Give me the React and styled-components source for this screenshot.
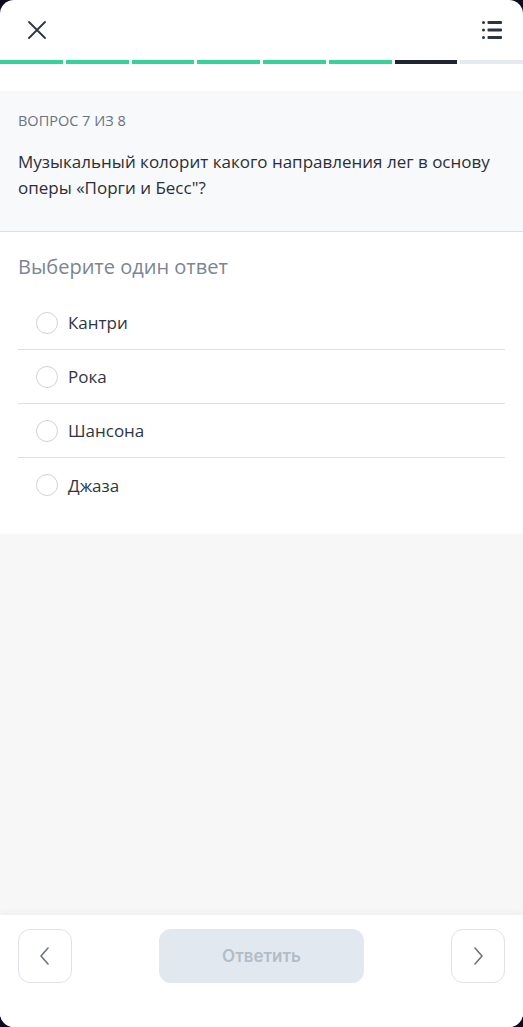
import React from "react";
import styled, { createGlobalStyle } from "styled-components";

const Global = createGlobalStyle`
  html, body { margin: 0; padding: 0; background: #0b0a1f; }
  * { box-sizing: border-box; }
  body { font-family: "Open Sans", "Noto Sans", sans-serif; }
`;

const Screen = styled.div`
  width: 523px;
  height: 1027px;
  background: #ffffff;
  border-radius: 14px;
  overflow: hidden;
  display: flex;
  flex-direction: column;
`;

const Header = styled.header`
  height: 60px;
  display: flex;
  align-items: center;
  justify-content: space-between;
  padding: 0 18px 0 24px;
`;

const IconButton = styled.button`
  width: 26px;
  height: 26px;
  padding: 0;
  border: none;
  background: transparent;
  display: flex;
  align-items: center;
  justify-content: center;
  color: #2d3340;
`;

const Progress = styled.div`
  display: grid;
  grid-template-columns: repeat(8, 1fr);
  column-gap: 3px;
  height: 4px;
`;

const Segment = styled.div`
  height: 4px;
  background: ${(p) =>
    p.$state === "done" ? "#34d399" : p.$state === "current" ? "#1f2433" : "#e5e9f0"};
`;

const QuestionPanel = styled.section`
  margin-top: 27px;
  background: #f8f9fa;
  border-bottom: 1px solid #dcdfe4;
  padding: 20px 18px 30px;
`;

const Counter = styled.div`
  font-size: 14.5px;
  line-height: 20px;
  color: #6b7280;
  text-transform: uppercase;
  margin-bottom: 18px;
`;

const QuestionText = styled.p`
  margin: 0;
  font-size: 17px;
  line-height: 26px;
  color: #2b2f38;
`;

const Answers = styled.section`
  background: #ffffff;
  padding: 22px 18px 22px;
`;

const Hint = styled.h2`
  margin: 0 0 16px;
  font-size: 20px;
  line-height: 26px;
  font-weight: 500;
  color: #7b8593;
`;

const OptionList = styled.ul`
  list-style: none;
  margin: 0;
  padding: 0;
`;

const Option = styled.li`
  height: 54px;
  display: flex;
  align-items: center;
  gap: 10px;
  padding-left: 18px;
  border-bottom: ${(p) => (p.$last ? "none" : "1px solid #dcdfe3")};
  font-size: 17px;
  color: #2f3540;
`;

const Radio = styled.span`
  width: 22px;
  height: 22px;
  border-radius: 50%;
  border: 1px solid #cfd3d8;
  background: #fff;
  flex: none;
`;

const Filler = styled.div`
  flex: 1;
  background: #f7f7f7;
`;

const Footer = styled.footer`
  height: 112px;
  background: #fff;
  box-shadow: 0 -2px 8px rgba(0, 0, 0, 0.04);
  display: flex;
  align-items: flex-start;
  justify-content: space-between;
  padding: 14px 18px 0;
`;

const NavButton = styled.button`
  width: 54px;
  height: 54px;
  border-radius: 12px;
  border: 1px solid #dfe2e6;
  background: #fff;
  display: flex;
  align-items: center;
  justify-content: center;
  padding: 0;
  color: #6b7280;
`;

const SubmitButton = styled.button`
  width: 205px;
  height: 54px;
  border-radius: 12px;
  border: none;
  background: #e2e8f0;
  color: #b3bcc8;
  font-family: Inter, "Noto Sans", sans-serif;
  font-weight: 600;
  font-size: 17px;
`;

const options = ["Кантри", "Рока", "Шансона", "Джаза"];
const segments = ["done", "done", "done", "done", "done", "done", "current", "todo"];

export default function App() {
  return (
    <>
      <Global />
      <Screen>
        <Header>
          <IconButton aria-label="close">
            <svg width="20" height="20" viewBox="0 0 20 20" fill="none" stroke="currentColor" strokeWidth="1.8" strokeLinecap="round">
              <path d="M2 2 L18 18 M18 2 L2 18" />
            </svg>
          </IconButton>
          <IconButton aria-label="list">
            <svg width="22" height="20" viewBox="0 0 22 20" fill="currentColor">
              <circle cx="2.5" cy="2.5" r="1.5" />
              <circle cx="2.5" cy="10" r="1.5" />
              <circle cx="2.5" cy="17.5" r="1.5" />
              <rect x="6.5" y="1" width="14.5" height="3" rx="1" />
              <rect x="6.5" y="8.5" width="14.5" height="3" rx="1" />
              <rect x="6.5" y="16" width="14.5" height="3" rx="1" />
            </svg>
          </IconButton>
        </Header>
        <Progress>
          {segments.map((s, i) => (
            <Segment key={i} $state={s} />
          ))}
        </Progress>
        <QuestionPanel>
          <Counter>Вопрос 7 из 8</Counter>
          <QuestionText>
            Музыкальный колорит какого направления лег в основу оперы «Порги и Бесс"?
          </QuestionText>
        </QuestionPanel>
        <Answers>
          <Hint>Выберите один ответ</Hint>
          <OptionList>
            {options.map((o, i) => (
              <Option key={o} $last={i === options.length - 1}>
                <Radio />
                {o}
              </Option>
            ))}
          </OptionList>
        </Answers>
        <Filler />
        <Footer>
          <NavButton aria-label="prev">
            <svg width="12" height="20" viewBox="0 0 12 20" fill="none" stroke="currentColor" strokeWidth="1.6" strokeLinecap="round" strokeLinejoin="round">
              <path d="M9 2 L2 10 L9 18" />
            </svg>
          </NavButton>
          <SubmitButton>Ответить</SubmitButton>
          <NavButton aria-label="next">
            <svg width="12" height="20" viewBox="0 0 12 20" fill="none" stroke="currentColor" strokeWidth="1.6" strokeLinecap="round" strokeLinejoin="round">
              <path d="M3 2 L10 10 L3 18" />
            </svg>
          </NavButton>
        </Footer>
      </Screen>
    </>
  );
}
